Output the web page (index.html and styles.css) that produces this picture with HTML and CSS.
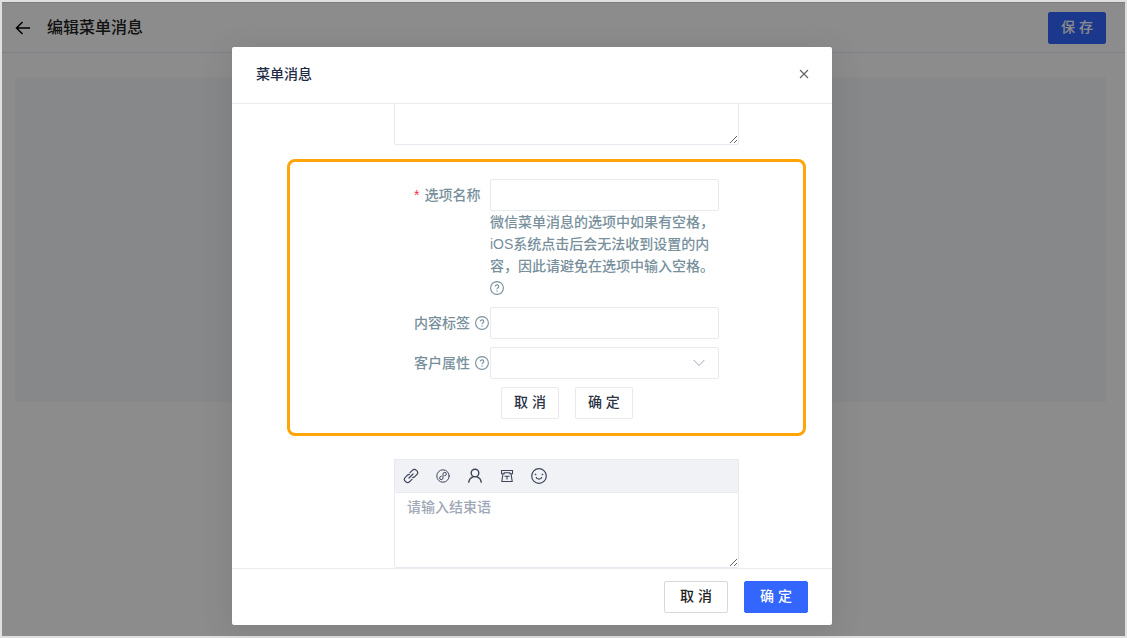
FILE: index.html
```html
<!DOCTYPE html>
<html lang="zh-CN">
<head>
<meta charset="utf-8">
<title>编辑菜单消息</title>
<link rel="stylesheet" href="styles.css">
</head>
<body>
<svg width="0" height="0" class="sprite" aria-hidden="true">
  <symbol id="help" viewBox="0 0 14 14">
    <circle cx="7" cy="7" r="6.4" fill="none" stroke="currentColor" stroke-width="1.1"/>
    <path d="M5.2 5.6C5.2 4.5 6 3.9 7 3.9s1.8.6 1.8 1.6c0 1.3-1.8 1.3-1.8 2.8" fill="none" stroke="currentColor" stroke-width="1.1"/>
    <circle cx="7" cy="10" r=".7" fill="currentColor"/>
  </symbol>
</svg>
<div class="page">
  <header class="topbar">
    <button class="icon-btn back" type="button" aria-label="返回">
      <svg width="16" height="14" viewBox="0 0 16 14" fill="none" stroke="currentColor" stroke-width="1.5"><path d="M15 7H1.5M7.5 1l-6 6 6 6"/></svg>
    </button>
    <h1 class="page-title">编辑菜单消息</h1>
    <button class="btn primary" type="button">保 存</button>
  </header>
  <main class="content"><div class="panel"></div></main>

  <div class="overlay">
    <section class="modal" role="dialog" aria-labelledby="modal-title">
      <header class="modal-head">
        <h2 class="modal-title" id="modal-title">菜单消息</h2>
        <button class="icon-btn close" type="button" aria-label="关闭">
          <svg width="10" height="10" viewBox="0 0 10 10" fill="none" stroke="currentColor" stroke-width="1.2"><path d="M1 1l8 8M9 1L1 9"/></svg>
        </button>
      </header>
      <div class="modal-body">
        <textarea class="area opening" aria-label="开始语"></textarea>
        <form class="option-form">
          <label class="label" for="option-name"><span class="required">*</span> 选项名称</label>
          <div class="field">
            <input class="control" id="option-name" type="text">
            <p class="hint">微信菜单消息的选项中如果有空格，iOS系统点击后会无法收到设置的内容，因此请避免在选项中输入空格。 <svg class="help" width="14" height="14"><use href="#help"/></svg></p>
          </div>
          <label class="label" for="content-tag">内容标签 <svg class="help" width="14" height="14"><use href="#help"/></svg></label>
          <input class="control" id="content-tag" type="text">
          <label class="label" for="customer-attr">客户属性 <svg class="help" width="14" height="14"><use href="#help"/></svg></label>
          <div class="select-wrap">
            <select class="control" id="customer-attr"><option></option></select>
            <svg class="chevron" width="12" height="8" viewBox="0 0 12 8" fill="none" stroke="currentColor"><path d="M.7 1L6 6.5 11.3 1"/></svg>
          </div>
          <div class="form-actions">
            <button class="btn light" type="button">取 消</button>
            <button class="btn light" type="button">确 定</button>
          </div>
        </form>
        <div class="editor">
          <div class="toolbar">
            <button class="icon-btn tool" type="button" aria-label="链接"><svg width="16" height="16" viewBox="0 0 16 16" fill="none" stroke="currentColor" stroke-width="1.2" stroke-linecap="round"><path d="M7 4.6l2.3-2.3a2.9 2.9 0 0 1 4.1 0l.3.3a2.9 2.9 0 0 1 0 4.1L11.6 8.8a2.9 2.9 0 0 1-2 .8M9 11.4l-2.3 2.3a2.9 2.9 0 0 1-4.1 0l-.3-.3a2.9 2.9 0 0 1 0-4.1l2.1-2.1a2.9 2.9 0 0 1 2-.8M6 10l4-4"/></svg></button>
            <button class="icon-btn tool" type="button" aria-label="小程序"><svg width="16" height="16" viewBox="0 0 16 16" fill="none" stroke="currentColor" stroke-linecap="round"><circle cx="8" cy="8" r="6.2"/><path d="M6.3 8.2A1.7 1.7 0 1 0 8 10V6a1.7 1.7 0 1 1 1.7 1.8"/></svg></button>
            <button class="icon-btn tool" type="button" aria-label="联系人"><svg width="16" height="16" viewBox="0 0 16 16" fill="none" stroke="currentColor" stroke-width="1.4"><circle cx="8" cy="5" r="3.8"/><path d="M1.7 14.8c.2-3.2 2.2-5.3 4.8-6.2M14.3 14.8c-.2-3.2-2.2-5.3-4.8-6.2"/></svg></button>
            <button class="icon-btn tool" type="button" aria-label="电话"><svg width="16" height="16" viewBox="0 0 16 16" fill="none" stroke="currentColor" stroke-width="1.1"><path d="M2.5 2.5h11v3.2h-2.7V4.8H5.2v.9H2.5zM4 5.7l-1.2 7.8h10.4L12 5.7M5.5 8.2h5M8 8.2v3.3"/></svg></button>
            <button class="icon-btn tool" type="button" aria-label="表情"><svg width="16" height="16" viewBox="0 0 16 16" fill="none" stroke="currentColor" stroke-width="1.2"><circle cx="8" cy="8" r="7.3"/><path d="M5.2 9c.5 2.7 5.1 2.7 5.6 0M3.8 6l1.5.9M12.2 6l-1.5.9"/></svg></button>
          </div>
          <textarea class="area closing" aria-label="结束语" placeholder="请输入结束语"></textarea>
        </div>
      </div>
      <footer class="modal-foot">
        <button class="btn plain wide" type="button">取 消</button>
        <button class="btn primary wide" type="button">确 定</button>
      </footer>
    </section>
  </div>
</div>
</body>
</html>
```
FILE: styles.css
```css
* { box-sizing: border-box; }

body {
  margin: 0;
  color: #1f2b45;
  font: 500 14px/22px "Liberation Sans", "Noto Sans CJK SC", sans-serif;
}

h1, h2, p { margin: 0; font-weight: 500; }

button, input, select, textarea { font: inherit; color: inherit; }

.sprite { position: absolute; }

.page {
  position: relative;
  display: flex;
  flex-direction: column;
  min-height: 100vh;
  border: 2px solid #e0e0e0;
  background: #fff;
}

.topbar {
  display: flex;
  align-items: center;
  height: 51px;
  padding: 0 19px 0 13px;
  border-top: 1px solid #e4e6ea;
  border-bottom: 1px solid #e8eaf2;
}

.page-title { flex: 1; margin-left: 16px; font-size: 16px; color: #222; }

.icon-btn {
  display: flex;
  align-items: center;
  justify-content: center;
  width: 16px;
  height: 16px;
  padding: 0;
  border: 0;
  background: none;
}

.back { color: #000; }

.content { flex: 1; padding: 24px 19px 24px 13px; }

.panel { height: 325px; background: #f5f8fb; }

.btn {
  height: 32px;
  padding: 0 12px 2px;
  border: 1px solid #e8eaf0;
  border-radius: 2px;
  background: #fff;
  white-space: nowrap;
}

.btn.primary { border-color: #36f; background: #36f; color: #fff; }
.btn.plain { border-color: #d9d9d9; color: #222; }
.btn.light { color: #2b3345; }
.btn.wide { width: 64px; }

.overlay {
  position: absolute;
  inset: 0;
  display: flex;
  align-items: flex-start;
  justify-content: center;
  padding: 45px 63px 11px 0;
  background: rgba(0, 0, 0, 0.45);
}

.modal {
  display: flex;
  flex-direction: column;
  width: 600px;
  height: 100%;
  border-radius: 2px;
  background: #fff;
  box-shadow: 0 6px 30px 5px rgba(0, 0, 0, 0.08);
}

.modal-head {
  display: flex;
  align-items: center;
  justify-content: space-between;
  padding: 16px 20px 18px 24px;
  border-bottom: 1px solid #ebebed;
}

.modal-title { font-size: 14px; }

.close { color: #666; }

.modal-body {
  flex: 1;
  min-height: 0;
  overflow: hidden;
  padding: 0 26px 0 55px;
}

.area {
  display: block;
  padding: 3px 12px;
  border: 1px solid #e8eaf0;
  border-radius: 2px;
  background: #fff;
  outline: 0;
  resize: vertical;
}

.area::placeholder { color: #a0a8b8; }

.opening { width: 345px; height: 76px; margin: -35px 0 14px 107px; }

.option-form {
  display: grid;
  grid-template-columns: 76px 1fr;
  row-gap: 8px;
  padding: 17px 84px 14px 124px;
  border: 3px solid #ffa50a;
  border-radius: 8px;
  color: #78909c;
}

.label {
  display: flex;
  align-items: center;
  gap: 5px;
  height: 32px;
  white-space: nowrap;
}

.required { color: #f5364a; }

.help { flex: none; vertical-align: -2px; }

.control {
  display: block;
  width: 100%;
  height: 32px;
  padding: 4px 11px;
  border: 1px solid #e8eaf0;
  border-radius: 2px;
  background: #fff;
  appearance: none;
}

.select-wrap { position: relative; }

.chevron { position: absolute; top: 12px; right: 14px; color: #a0a8b8; pointer-events: none; }

.form-actions {
  display: flex;
  grid-column: 1 / -1;
  gap: 16px;
  padding-left: 87px;
}

.editor { width: 345px; margin: 23px 0 0 107px; }

.toolbar {
  display: flex;
  align-items: center;
  gap: 16px;
  height: 33px;
  padding: 0 8px;
  border: 1px solid #e8eaf0;
  border-bottom: 0;
  background: #f1f2f6;
}

.tool { color: #3d465a; }

.closing { width: 100%; height: 76px; }

.modal-foot {
  display: flex;
  justify-content: flex-end;
  gap: 16px;
  padding: 12px 24px;
  border-top: 1px solid #ebebed;
}
```
